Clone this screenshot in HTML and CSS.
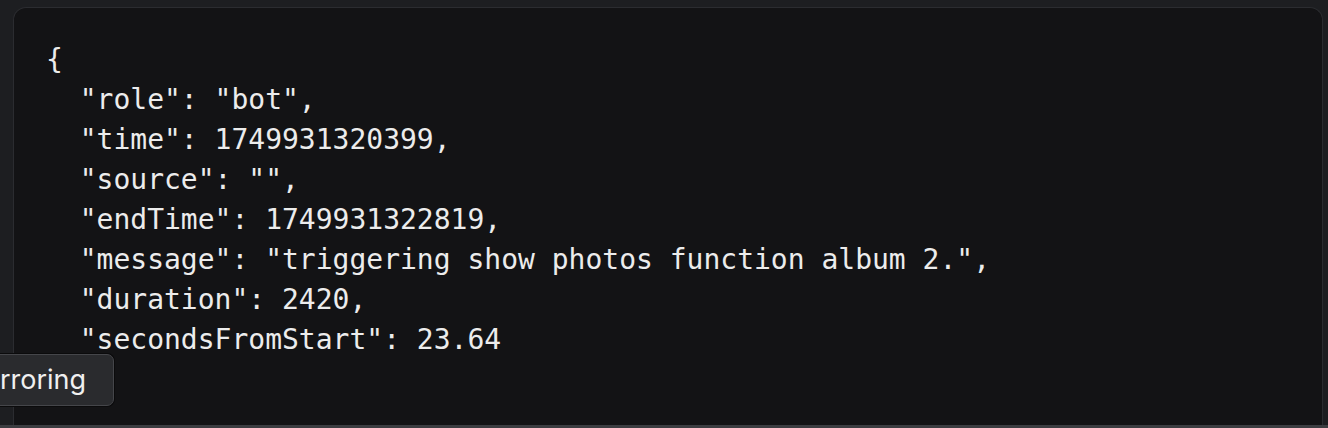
FILE: index.html
```html
<!DOCTYPE html>
<html>
<head>
<meta charset="utf-8">
<link rel="stylesheet" href="styles.css">
</head>
<body>
<div class="frame">
  <div class="card">
<pre class="code">{
  "role": "bot",
  "time": 1749931320399,
  "source": "",
  "endTime": 1749931322819,
  "message": "triggering show photos function album 2.",
  "duration": 2420,
  "secondsFromStart": 23.64</pre>
  </div>
  <div class="tooltip">rroring</div>
</div>
<div class="bottom-strip"></div>
</body>
</html>
```
FILE: styles.css
```css
html, body {
  margin: 0;
  padding: 0;
  width: 1328px;
  height: 428px;
  overflow: hidden;
  background: #1d1e21;
}
.frame {
  position: relative;
  height: 425px;
  padding: 7px 5px 0 13px;
  box-sizing: border-box;
  display: flex;
  background: #1d1e21;
}
.card {
  flex: 1;
  background: #131315;
  border: 1px solid #2b2c30;
  border-bottom: none;
  border-radius: 13px 13px 0 0;
  padding: 32px 0 0 32px;
  box-sizing: border-box;
}
.code {
  margin: 0;
  font-family: "DejaVu Sans Mono", monospace;
  font-size: 28px;
  line-height: 40px;
  color: #ececec;
}
.tooltip {
  position: absolute;
  left: -10px;
  top: 354px;
  width: 124px;
  height: 52px;
  box-sizing: border-box;
  padding: 0 0 0 9px;
  background: #2a2b2e;
  border: 1px solid #45464a;
  box-shadow: 0 0 0 1px #0b0b0c;
  border-radius: 7px;
  font-family: "Inter", "Liberation Sans", sans-serif;
  font-size: 27px;
  line-height: 50px;
  color: #f0f0f0;
}
.bottom-strip {
  height: 3px;
  background: #3c3d41;
}
```
